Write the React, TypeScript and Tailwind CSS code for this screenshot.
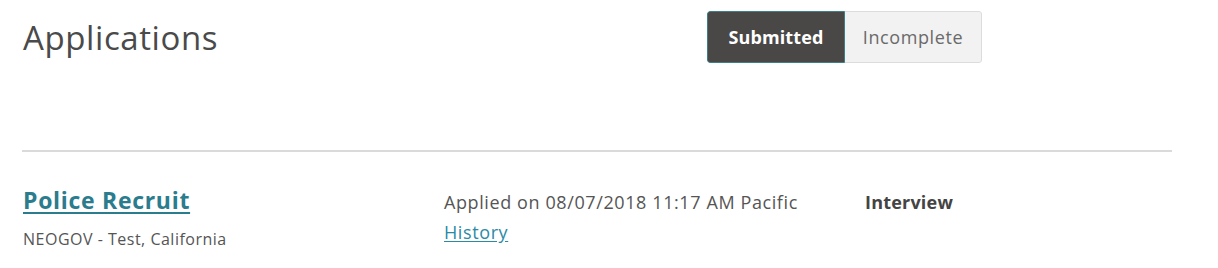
import React from 'react';

export default function App() {
  return (
    <div className="w-[1218px] h-[268px] bg-white font-['Open_Sans',sans-serif] text-[#4a4a4a] overflow-hidden">
      <div className="flex items-start pl-[23px]">
        <h1 className="text-[33px] leading-none mt-[21px] tracking-[0.6px] text-[#4a4a4a] flex-1">Applications</h1>
        <div className="flex mt-[11px] mr-[236px] rounded-[3px] overflow-hidden">
          <button className="w-[138px] h-[52px] bg-[#4a4846] border border-[#3d7f86] rounded-l-[3px] text-white font-bold text-[18px] tracking-[0.1px]">
            Submitted
          </button>
          <button className="w-[137px] h-[52px] bg-[#f2f2f2] border border-l-0 border-[#dcdcdc] rounded-r-[3px] text-[#6a6a6a] font-medium text-[18px] tracking-[0.6px]">
            Incomplete
          </button>
        </div>
      </div>

      <div className="mt-[87px] mx-[22px] w-[1150px] h-[2px] bg-[#dadada]" />

      <div className="flex pl-[23px] pt-[37px]">
        <div className="w-[421px]">
          <a href="#" className="text-[23px] font-bold leading-none tracking-[0.7px] text-[#2b7c8d] underline underline-offset-[3px]">
            Police Recruit
          </a>
          <p className="mt-[12px] text-[16px] tracking-[0.5px] text-[#555]">NEOGOV - Test, California</p>
        </div>
        <div className="w-[421px] text-[18px] leading-[30px] -mt-[2px] tracking-[0.6px] text-[#555]">
          <p>Applied on 08/07/2018 11:17 AM Pacific</p>
          <a href="#" className="text-[#2b8aa6] underline underline-offset-[2px]">History</a>
        </div>
        <div className="text-[18px] font-bold leading-[30px] -mt-[2px] tracking-[0.2px] text-[#444]">Interview</div>
      </div>
    </div>
  );
}
